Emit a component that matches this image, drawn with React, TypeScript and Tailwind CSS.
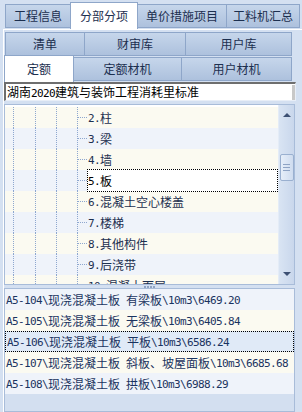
import { Fragment } from "react";

const treeRows = [
  "2.柱",
  "3.梁",
  "4.墙",
  "5.板",
  "6.混凝土空心楼盖",
  "7.楼梯",
  "8.其他构件",
  "9.后浇带",
  "10.混凝土面层",
];

const listRows = [
  "A5-104\\现浇混凝土板 有梁板\\10m3\\6469.20",
  "A5-105\\现浇混凝土板 无梁板\\10m3\\6405.84",
  "A5-106\\现浇混凝土板 平板\\10m3\\6586.24",
  "A5-107\\现浇混凝土板 斜板、坡屋面板\\10m3\\6685.68",
  "A5-108\\现浇混凝土板 拱板\\10m3\\6988.29",
];

// ascii runs are half width (6px), like the old bitmap font
const Txt = ({ s }: { s: string }) => (
  <>
    {s
      .split(/([\x00-\x7f]+)/)
      .filter(Boolean)
      .map((p, i) =>
        /^[\x00-\x7f]+$/.test(p) ? (
          <span
            key={i}
            className="font-['DejaVu_Sans_Mono',monospace] text-[11px] tracking-[-0.62px]"
          >
            {p}
          </span>
        ) : (
          <Fragment key={i}>{p}</Fragment>
        )
      )}
  </>
);

const idle =
  "flex items-center justify-center border border-[#8ea6c9] bg-linear-to-b from-[#c6d6eb] to-[#adc1dd] text-[12px] leading-none text-[#1c2f4f]";
const active =
  "flex items-center justify-center border border-[#8ea6c9] border-b-0 bg-white text-[12px] leading-none text-[#1c2f4f]";

const dot = "border-dotted border-[#8ea7cf]";

const App = () => {
  return (
    <div className="h-[412px] w-[302px] overflow-hidden bg-[#d4e0f1] font-['Noto_Sans_CJK_SC',sans-serif] text-[12px] text-[#1c2f4f]">
      {/* top tabs */}
      <div className="flex h-[29px] items-start pl-[5px] pt-[4px]">
        <div className={`${idle} h-[24px] w-[66px]`}>工程信息</div>
        <div className={`${active} relative z-10 -ml-px -mt-[2px] h-[27px] w-[68px]`}>分部分项</div>
        <div className={`${idle} -ml-px h-[24px] w-[90px]`}>单价措施项目</div>
        <div className={`${idle} -ml-px h-[24px] w-[74px]`}>工料机汇总</div>
      </div>

      <div className="ml-[3px] flex h-[383px] flex-col border-l border-t border-white">
        {/* tab row 2 */}
        <div className="mt-[2px] flex h-[23px] pl-[1px]">
          <div className={`${idle} h-[24px] w-[80px]`}>清单</div>
          <div className={`${idle} -ml-px h-[24px] w-[102px]`}>财审库</div>
          <div className={`${idle} -ml-px h-[24px] w-[107px]`}>用户库</div>
        </div>
        {/* tab row 3 */}
        <div className="relative z-10 flex h-[27px] items-start">
          <div className={`${active} h-[27px] w-[70px]`}>定额</div>
          <div className={`${idle} -ml-px mt-[2px] h-[24px] w-[109px]`}>定额材机</div>
          <div className={`${idle} -ml-px mt-[2px] h-[24px] w-[111px]`}>用户材机</div>
        </div>

        {/* combo */}
        <div className="flex h-[19px] w-[292px] items-center border-b border-l-2 border-r border-t-2 border-b-[#e8eef7] border-l-[#6e6e6e] border-r-[#e8eef7] border-t-[#6e6e6e] bg-white">
          <span className="flex-1 whitespace-pre pl-[1px] leading-none text-black">
            <Txt s="湖南2020建筑与装饰工程消耗里标准" />
          </span>
          <div className="h-[15px] w-[3px] bg-[#c8c8c8]" />
        </div>

        {/* tree */}
        <div className="mt-[3px] flex h-[181px] w-[291px] overflow-hidden border border-[#a8bcd9] bg-white">
          <div className="flex-1 overflow-hidden pt-[2px]">
            {treeRows.map((r, i) => {
              const sel = i === 3;
              return (
                <div
                  key={r}
                  className={`flex h-[21px] ${i % 2 === 0 ? "bg-[#fbfaf1]" : "bg-[#eff3fa]"}`}
                >
                  <div className="w-[8px]" />
                  <div className={`w-[22px] border-l ${dot}`} />
                  <div className={`w-[21px] border-l ${dot}`} />
                  <div className={`w-[21px] border-l ${dot}`} />
                  <div className={`flex w-[10px] items-center border-l ${dot}`}>
                    <div className={`w-full border-t ${dot}`} />
                  </div>
                  {sel ? (
                    <div className="-mt-px flex h-[23px] flex-1 items-center whitespace-pre border border-dotted border-black bg-white pt-[1px] leading-none text-black">
                      <Txt s={r} />
                    </div>
                  ) : (
                    <div className="flex items-center whitespace-pre pl-[1px] pt-[1px] leading-none">
                      <Txt s={r} />
                    </div>
                  )}
                </div>
              );
            })}
          </div>
          {/* scrollbar */}
          <div className="flex w-[16px] flex-col items-center border-l border-[#e4ecf7] bg-linear-to-r from-[#d9e4f3] to-[#c9d7ec]">
            <div className="mt-[8px] h-0 w-0 border-x-[4px] border-b-[4px] border-x-transparent border-b-[#3d5073]" />
            <div className="mt-[37px] flex h-[27px] w-[14px] flex-col items-center justify-center gap-[2px] rounded-[2px] border border-[#9ab0d0] bg-linear-to-r from-[#e6eef9] to-[#cfdcef]">
              <div className="h-px w-[7px] bg-[#8ea3c4]" />
              <div className="h-px w-[7px] bg-[#8ea3c4]" />
              <div className="h-px w-[7px] bg-[#8ea3c4]" />
            </div>
            <div className="mt-auto mb-[8px] h-0 w-0 border-x-[4px] border-t-[4px] border-x-transparent border-t-[#3d5073]" />
          </div>
        </div>

        {/* splitter */}
        <div className="flex h-[3px] w-[291px] items-center justify-center gap-[1px]">
          <div className="h-[2px] w-[2px] bg-[#8ea3c4]" />
          <div className="h-[2px] w-[2px] bg-[#8ea3c4]" />
          <div className="h-[2px] w-[2px] bg-[#8ea3c4]" />
          <div className="h-[2px] w-[2px] bg-[#8ea3c4]" />
        </div>

        {/* list */}
        <div className="w-[291px] flex-1 overflow-hidden border border-[#a8bcd9] bg-[#d3dff0]">
          {listRows.map((r, i) => (
            <div
              key={r}
              className={`flex h-[21px] items-center whitespace-pre pl-[1px] pt-[1px] leading-none text-[#1a3360] ${
                i === 2
                  ? "border border-dotted border-black bg-[#e0eaf7]"
                  : i % 2 === 0
                  ? "bg-[#eff3fa]"
                  : "bg-[#fbfaf1]"
              }`}
            >
              <Txt s={r} />
            </div>
          ))}
        </div>
      </div>
    </div>
  );
};

export default App;
